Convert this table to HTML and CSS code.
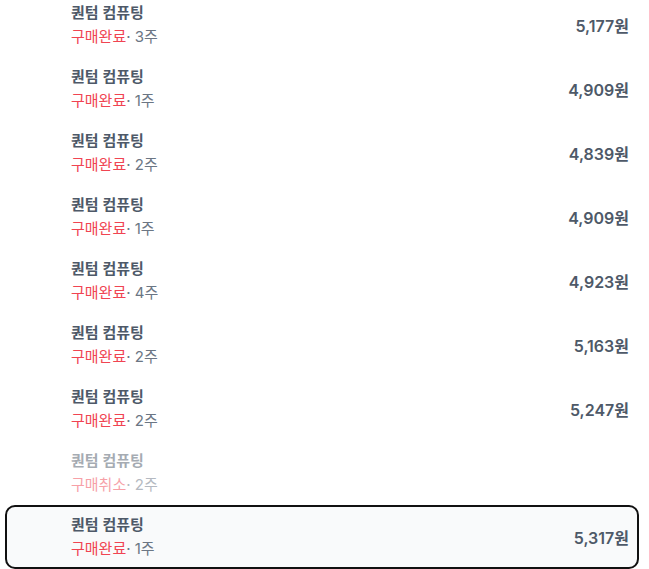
FILE: index.html
```html
<!DOCTYPE html>
<html lang="ko">
<head>
<meta charset="utf-8">
<link rel="stylesheet" href="styles.css">
</head>
<body>
<ul class="list">
  <li class="row"><div class="info"><div class="title">퀀텀 컴퓨팅</div><div class="sub"><span class="status">구매완료</span><span class="meta">· 3주</span></div></div><div class="price">5,177원</div></li>
  <li class="row"><div class="info"><div class="title">퀀텀 컴퓨팅</div><div class="sub"><span class="status">구매완료</span><span class="meta">· 1주</span></div></div><div class="price">4,909원</div></li>
  <li class="row"><div class="info"><div class="title">퀀텀 컴퓨팅</div><div class="sub"><span class="status">구매완료</span><span class="meta">· 2주</span></div></div><div class="price">4,839원</div></li>
  <li class="row"><div class="info"><div class="title">퀀텀 컴퓨팅</div><div class="sub"><span class="status">구매완료</span><span class="meta">· 1주</span></div></div><div class="price">4,909원</div></li>
  <li class="row"><div class="info"><div class="title">퀀텀 컴퓨팅</div><div class="sub"><span class="status">구매완료</span><span class="meta">· 4주</span></div></div><div class="price">4,923원</div></li>
  <li class="row"><div class="info"><div class="title">퀀텀 컴퓨팅</div><div class="sub"><span class="status">구매완료</span><span class="meta">· 2주</span></div></div><div class="price">5,163원</div></li>
  <li class="row"><div class="info"><div class="title">퀀텀 컴퓨팅</div><div class="sub"><span class="status">구매완료</span><span class="meta">· 2주</span></div></div><div class="price">5,247원</div></li>
  <li class="row row-cancelled"><div class="info"><div class="title">퀀텀 컴퓨팅</div><div class="sub"><span class="status">구매취소</span><span class="meta">· 2주</span></div></div></li>
  <li class="row row-selected"><div class="info"><div class="title">퀀텀 컴퓨팅</div><div class="sub"><span class="status">구매완료</span><span class="meta">· 1주</span></div></div><div class="price">5,317원</div></li>
</ul>
</body>
</html>
```
FILE: styles.css
```css
html, body {
  margin: 0;
  padding: 0;
  background: #ffffff;
  overflow: hidden;
}
body {
  font-family: Inter, "Noto Sans CJK KR", sans-serif;
}
.list {
  list-style: none;
  margin: -7px 0 0 0;
  padding: 0 10px 0 5px;
  display: flex;
  flex-direction: column;
}
.row {
  box-sizing: border-box;
  height: 64px;
  display: flex;
  align-items: center;
  justify-content: space-between;
  padding: 0 8px 0 64px;
  border: 2px solid transparent;
  border-radius: 10px;
}
.info {
  display: flex;
  flex-direction: column;
  gap: 2px;
}
.title {
  font-size: 15px;
  font-weight: 600;
  color: #4e5968;
  line-height: 22px;
}
.sub {
  font-size: 15px;
  line-height: 22px;
}
.status {
  color: #f04452;
}
.meta {
  color: #6b7684;
}
.price {
  font-size: 16px;
  font-weight: 600;
  color: #4e5968;
}
.row-cancelled {
  opacity: 0.5;
}
.row-selected {
  background: #f9fafb;
  border-color: #111111;
}
```
